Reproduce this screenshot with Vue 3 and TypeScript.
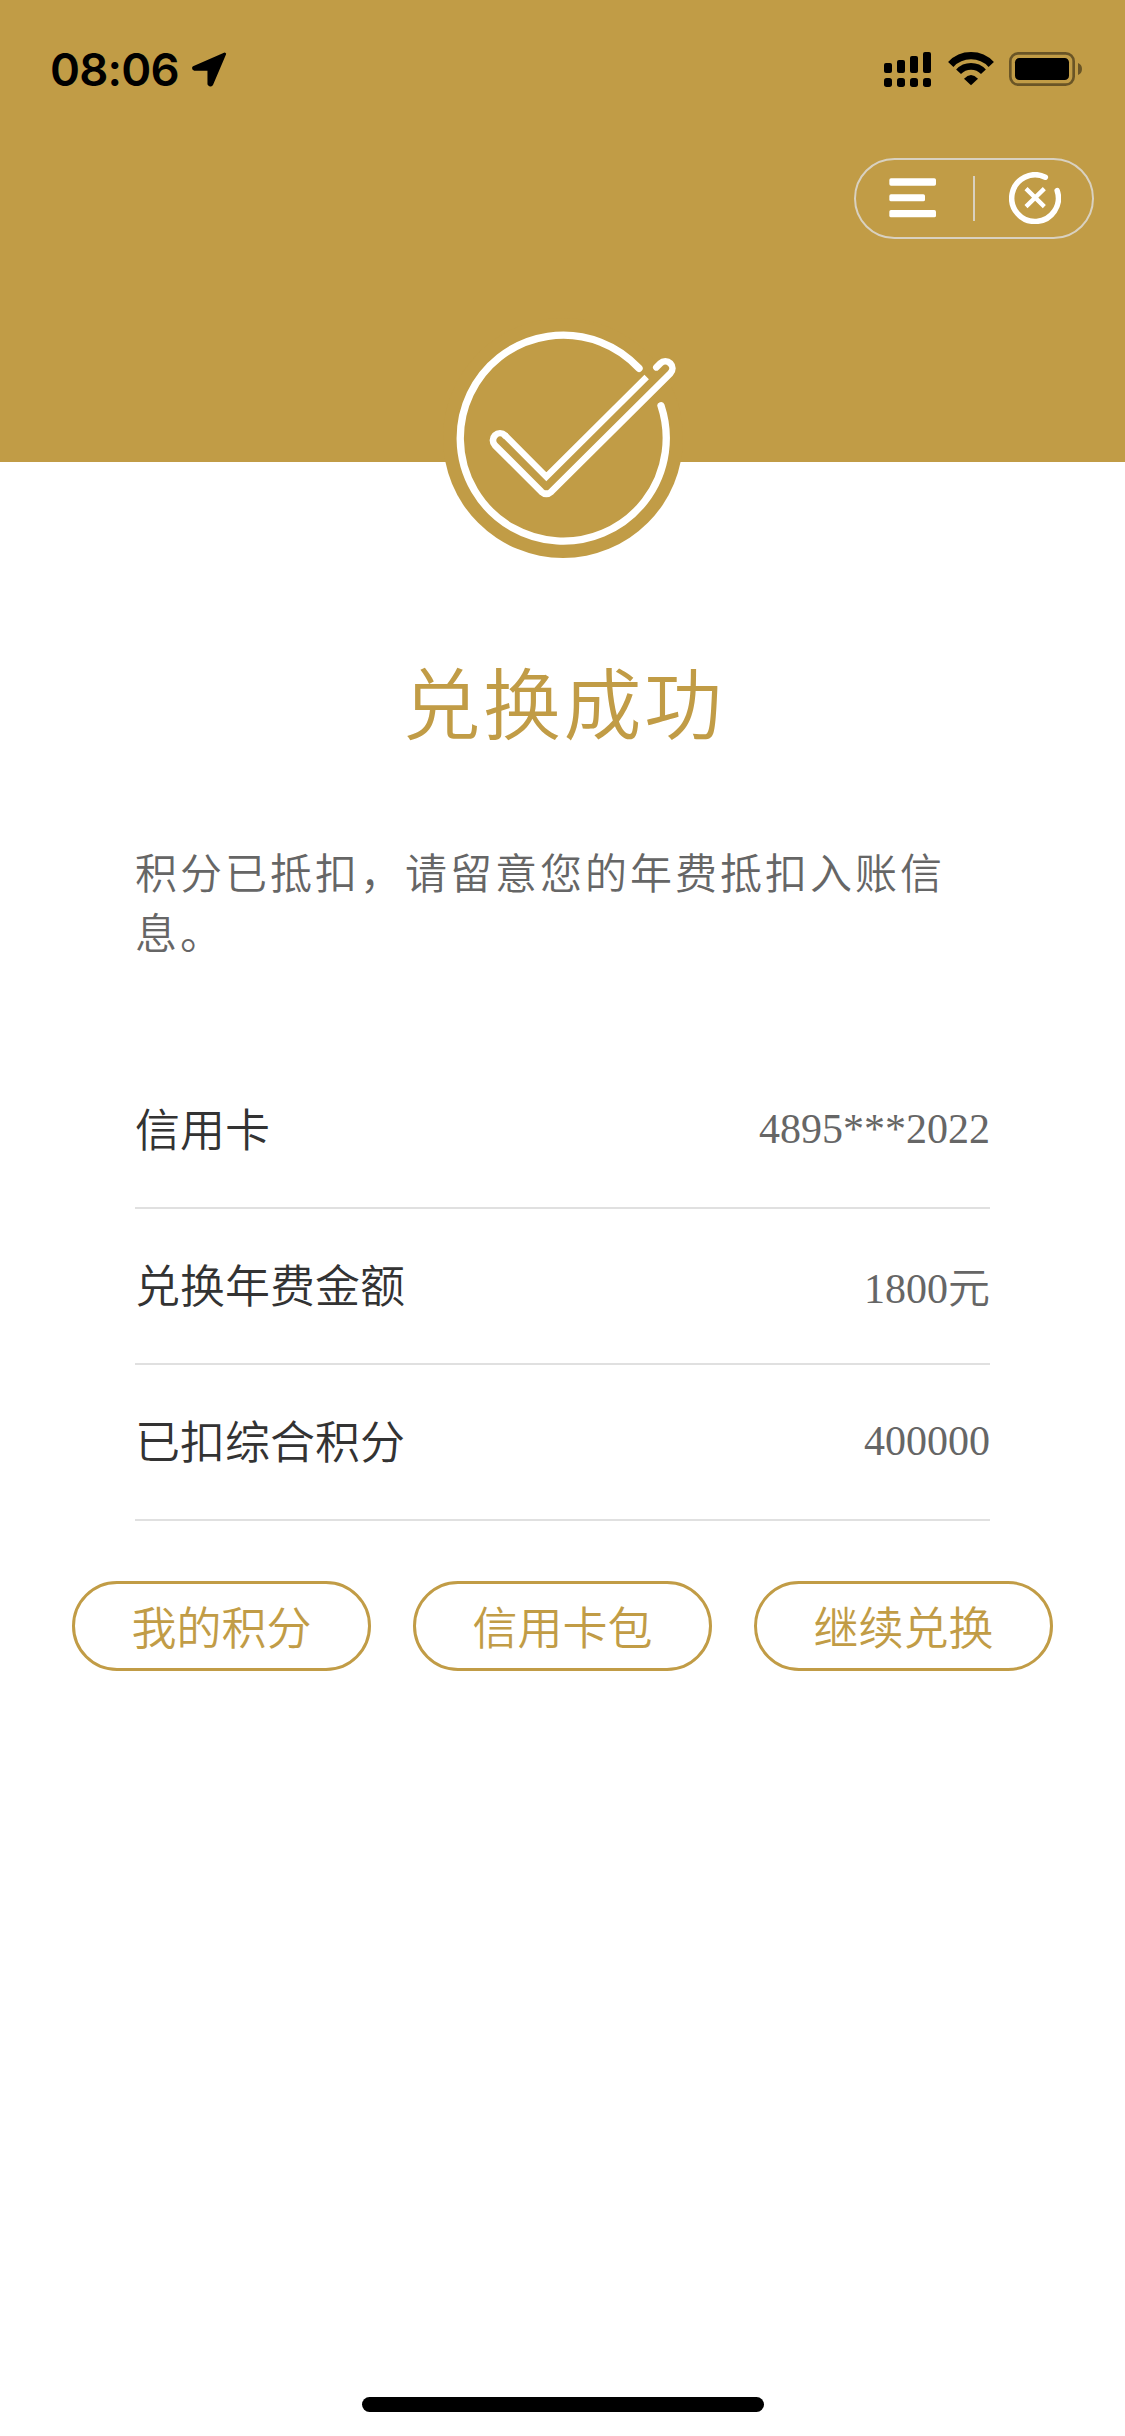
<script setup lang="ts">
interface DetailRow {
  label: string
  value: string
}

const rows: DetailRow[] = [
  { label: '信用卡', value: '4895***2022' },
  { label: '兑换年费金额', value: '1800元' },
  { label: '已扣综合积分', value: '400000' },
]

const actions: string[] = ['我的积分', '信用卡包', '继续兑换']
</script>

<template>
  <div class="screen">
    <header class="hero">
      <div class="status">
        <div class="clock">
          <span class="time">08:06</span>
          <svg class="location" viewBox="486 67 104 105" width="34.6" height="35">
            <path d="M584 73 L491 114 Q490 118 494 119 H537 V163 Q541 169 545 164 Z" stroke="#000" stroke-width="9" stroke-linejoin="round" />
          </svg>
        </div>
        <div class="indicators">
          <svg viewBox="72 66 141 105" width="47" height="35">
            <rect x="72" y="99" width="24" height="30" rx="6" />
            <rect x="111" y="90" width="24" height="39" rx="6" />
            <rect x="150" y="78" width="24" height="51" rx="6" />
            <rect x="189" y="66" width="24" height="63" rx="6" />
            <rect v-for="n in 4" :key="n" :x="33 + n * 39" y="144" width="24" height="27" rx="8" />
          </svg>
          <svg class="wifi" viewBox="264 66 138 105" width="46" height="35">
            <g fill="none" stroke="#000">
              <path d="M272.3 103.4 A83 83 0 0 1 393.7 103.4" stroke-width="22" />
              <path d="M295.7 125.2 A51 51 0 0 1 370.3 125.2" stroke-width="20" />
            </g>
            <path d="M312 146 Q333 124 354 146 L333 166 Z" />
          </svg>
          <svg class="battery" viewBox="447 66 219 105" width="73" height="35">
            <rect x="451" y="70" width="190" height="94" rx="24" fill="none" stroke="#000" stroke-opacity=".45" stroke-width="8" />
            <rect x="465" y="84" width="162" height="66" rx="13" />
            <path d="M654 99 Q666 104 666 117 Q666 130 654 135 Z" fill-opacity=".45" />
          </svg>
        </div>
      </div>

      <div class="capsule">
        <svg viewBox="147 81 141 156" width="47" height="52" fill="#fff">
          <rect x="148" y="100" width="140" height="22" rx="5" />
          <rect x="148" y="148" width="107" height="21" rx="5" />
          <rect x="148" y="195" width="140" height="22" rx="5" />
        </svg>
        <i class="divider"></i>
        <svg viewBox="507 81 156 156" width="52" height="52" fill="none" stroke="#fff">
          <path d="M616 96.500 A70 70 0 1 0 651.500 137" stroke-width="16.500" stroke-linecap="round" />
          <path d="M558 131 L613 185 M613 131 L558 185" stroke-width="13" />
        </svg>
      </div>

      <svg class="badge" viewBox="39 24 720 720" width="240" height="240" fill="none" stroke="#fff">
        <circle cx="399" cy="384" r="360" fill="#c19c46" stroke="none" />
        <g stroke-width="22" stroke-linecap="round">
          <path d="M627 175 A309 309 0 1 0 693 287" />
          <path d="M679 172 L691 160 A21 21 0 0 1 721 190 L364 545 Q349 558 334 545 L195 406 A21 21 0 0 1 225 376" stroke-width="20" />
          <path d="M224 375 L349 500 L650 201" stroke-width="19" stroke-linecap="butt" />
        </g>
      </svg>
    </header>

    <main class="content">
      <h1 class="title">兑换成功</h1>
      <p class="notice">积分已抵扣，请留意您的年费抵扣入账信息。</p>
      <div class="details">
        <div v-for="row in rows" :key="row.label" class="row">
          <span class="label">{{ row.label }}</span>
          <span class="value">{{ row.value }}</span>
        </div>
      </div>
    </main>

    <div class="actions">
      <button v-for="action in actions" :key="action" type="button" class="action">{{ action }}</button>
    </div>

    <div class="home-indicator"></div>
  </div>
</template>

<style>
body {
  margin: 0;
  background: #fff;
}
</style>

<style scoped>
.screen {
  box-sizing: border-box;
  display: flex;
  flex-direction: column;
  width: 1125px;
  height: 2436px;
  padding-bottom: 24px;
  background: #fff;
  font-family: "Noto Sans CJK SC", sans-serif;
  font-weight: 350;
}

svg {
  display: block;
}

.hero {
  position: relative;
  flex: none;
  display: flex;
  flex-direction: column;
  height: 462px;
  background: #c19c46;
}

.status {
  display: flex;
  justify-content: space-between;
  height: 106px;
  padding: 52px 43px 0 50px;
  box-sizing: border-box;
}

.clock,
.indicators {
  display: flex;
  align-items: flex-start;
}

.time {
  width: 142px;
  font: 600 45.5px/35px Inter, sans-serif;
  letter-spacing: -0.8px;
  white-space: nowrap;
}

.wifi {
  margin: 0 15px 0 17px;
}

.capsule {
  box-sizing: border-box;
  display: flex;
  align-items: center;
  justify-content: space-between;
  align-self: flex-end;
  width: 240px;
  height: 81px;
  margin: 52px 31px 0 0;
  padding: 0 31px 1px 33px;
  border: 2px solid rgba(222, 222, 222, 0.8);
  border-radius: 41px;
}

.divider {
  width: 2px;
  height: 45px;
  margin-left: 3px;
  background: rgba(222, 222, 222, 0.8);
}

.badge {
  position: absolute;
  left: 443px;
  top: 318px;
}

.content {
  padding: 196px 135px 0;
}

.title {
  margin: 0;
  padding-left: 2px;
  color: #c19c46;
  font-size: 78px;
  font-weight: 350;
  line-height: 84px;
  letter-spacing: 2.5px;
  text-align: center;
}

.notice {
  margin: 99px 0 0;
  color: #666;
  font-size: 42px;
  line-height: 60px;
  letter-spacing: 3px;
}

.details {
  margin-top: 92px;
}

.row {
  box-sizing: border-box;
  display: flex;
  align-items: center;
  justify-content: space-between;
  height: 156px;
  padding-bottom: 4px;
  border-bottom: 2px solid #e0e0e0;
}

.label {
  color: #333;
  font-size: 45px;
  line-height: 60px;
}

.value {
  padding-top: 1px;
  color: #666;
  font-family: "Liberation Serif", "Noto Sans CJK SC", serif;
  font-size: 42px;
}

.actions {
  display: flex;
  justify-content: space-between;
  padding: 60px 72px 0;
}

.action {
  box-sizing: border-box;
  width: 299px;
  height: 90px;
  padding: 0;
  border: 3px solid #c19c46;
  border-radius: 45px;
  background: none;
  color: #c19c46;
  font-family: inherit;
  font-weight: inherit;
  font-size: 45px;
  line-height: 84px;
}

.home-indicator {
  width: 402px;
  height: 15px;
  margin: auto auto 0;
  border-radius: 8px;
  background: #000;
}
</style>
